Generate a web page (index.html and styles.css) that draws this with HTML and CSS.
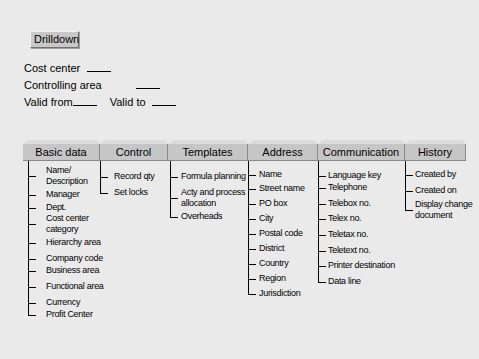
FILE: index.html
```html
<!DOCTYPE html>
<html>
<head>
<meta charset="utf-8">
<title>Cost center drilldown</title>
<link rel="stylesheet" href="styles.css">
</head>
<body>
<div class="page">
  <div class="toolbar"><button class="btn">Drilldown</button></div>
  <div class="form">
    <div class="row">Cost center<span class="blank b-cost"></span></div>
    <div class="row">Controlling area<span class="blank b-area"></span></div>
    <div class="row">Valid from<span class="blank"></span><span class="lbl-to">Valid to</span><span class="blank b-to"></span></div>
  </div>
  <div class="tabs">
    <div class="col col-basic">
      <div class="tab"><span class="tab-label">Basic data</span></div>
      <ul class="tree">
        <li>Name/<br>Description</li>
        <li>Manager</li>
        <li>Dept.</li>
        <li>Cost center<br>category</li>
        <li>Hierarchy area</li>
        <li>Company code</li>
        <li>Business area</li>
        <li>Functional area</li>
        <li>Currency</li>
        <li>Profit Center</li>
      </ul>
    </div>
    <div class="col col-control">
      <div class="tab"><span class="tab-label">Control</span></div>
      <ul class="tree">
        <li>Record qty</li>
        <li>Set locks</li>
      </ul>
    </div>
    <div class="col col-templates">
      <div class="tab"><span class="tab-label">Templates</span></div>
      <ul class="tree">
        <li>Formula planning</li>
        <li>Acty and process<br>allocation</li>
        <li>Overheads</li>
      </ul>
    </div>
    <div class="col col-address">
      <div class="tab"><span class="tab-label">Address</span></div>
      <ul class="tree">
        <li>Name</li>
        <li>Street name</li>
        <li>PO box</li>
        <li>City</li>
        <li>Postal code</li>
        <li>District</li>
        <li>Country</li>
        <li>Region</li>
        <li>Jurisdiction</li>
      </ul>
    </div>
    <div class="col col-comm">
      <div class="tab"><span class="tab-label">Communication</span></div>
      <ul class="tree">
        <li>Language key</li>
        <li>Telephone</li>
        <li>Telebox no.</li>
        <li>Telex no.</li>
        <li>Teletax no.</li>
        <li>Teletext no.</li>
        <li>Printer destination</li>
        <li>Data line</li>
      </ul>
    </div>
    <div class="col col-history">
      <div class="tab"><span class="tab-label">History</span></div>
      <ul class="tree">
        <li>Created by</li>
        <li>Created on</li>
        <li>Display change<br>document</li>
      </ul>
    </div>
  </div>
</div>
</body>
</html>
```

FILE: styles.css
```css
html, body {
  margin: 0;
  padding: 0;
  background: #eaeaea;
}

body {
  font-family: "Liberation Sans", Arial, sans-serif;
  color: #000;
  width: 479px;
  height: 359px;
  overflow: hidden;
}

.page {
  padding: 31px 0 0 0;
}

.toolbar {
  padding-left: 30px;
}

.btn {
  display: block;
  margin: 0;
  padding: 0 3px;
  height: 17px;
  width: 49px;
  font: 11px/15px "Liberation Sans", Arial, sans-serif;
  color: #000;
  background: #c8c8c8;
  border: 1px solid;
  border-color: #f2f2f2 #707070 #707070 #f2f2f2;
  box-shadow: 1px 1px 0 #a0a0a0;
}

.form {
  margin-top: 12px;
  padding-left: 24px;
  font-size: 11px;
  line-height: 17px;
}

.row {
  white-space: nowrap;
}

.blank {
  display: inline-block;
  width: 24px;
  height: 8px;
  border-bottom: 1px solid #000;
}

.b-cost { margin-left: 7px; }
.b-area { margin-left: 34px; }
.lbl-to { margin-left: 13px; }
.b-to { margin-left: 6px; }

.tabs {
  margin-top: 29px;
  padding-left: 23px;
  display: grid;
  grid-template-columns: 77px 68px 80px 70px 87px 61px;
}

.col {
  display: flex;
  flex-direction: column;
}

.tab::before {
  content: "";
  display: block;
  height: 4px;
  background: #dcdcdc;
  clip-path: polygon(5px 0, calc(100% - 3px) 0, 100% 100%, 0 100%);
}

.tab-label {
  display: block;
  height: 16px;
  line-height: 16px;
  font-size: 11px;
  text-align: center;
  white-space: nowrap;
  background: #c6c6c6;
  border-right: 1px solid #8a8a8a;
  border-bottom: 1px solid #8a8a8a;
}

.tree {
  list-style: none;
  margin: 0;
  padding: 0;
  border-left: 1px solid #000;
  font-size: 9px;
  line-height: 11px;
  letter-spacing: -0.3px;
  white-space: nowrap;
}

.tree li {
  position: relative;
  margin-top: 4px;
}

.tree li::before {
  content: "";
  position: absolute;
  left: 0;
  top: 50%;
  width: 7px;
  height: 1px;
  background: #000;
}

.tree li:last-child::after {
  content: "";
  position: absolute;
  left: -1px;
  top: calc(50% + 1px);
  bottom: 0;
  width: 1px;
  background: #eaeaea;
}

/* Basic data */
.col-basic .tree { margin-left: 5px; padding-top: 4px; }
.col-basic .tree li { padding-left: 17px; }
.col-basic .tree li:nth-child(1) { margin-top: 0; }
.col-basic .tree li:nth-child(2) { margin-top: 2px; }
.col-basic .tree li:nth-child(3) { margin-top: 2px; }
.col-basic .tree li:nth-child(4) { margin-top: 0; }
.col-basic .tree li:nth-child(5) { margin-top: 2px; }
.col-basic .tree li:nth-child(6) { margin-top: 5px; }
.col-basic .tree li:nth-child(7) { margin-top: 1px; }
.col-basic .tree li:nth-child(8) { margin-top: 5px; }
.col-basic .tree li:nth-child(9) { margin-top: 5px; }
.col-basic .tree li:nth-child(10) { margin-top: 1px; }

/* Control */
.col-control .tree { padding-top: 10px; }
.col-control .tree li { padding-left: 13px; }
.col-control .tree li:nth-child(1) { margin-top: 0; }
.col-control .tree li:nth-child(2) { margin-top: 5px; }

/* Templates */
.col-templates .tree { margin-left: 2px; padding-top: 10px; }
.col-templates .tree li { padding-left: 10px; }
.col-templates .tree li:nth-child(1) { margin-top: 0; }
.col-templates .tree li:nth-child(2) { margin-top: 5px; }
.col-templates .tree li:nth-child(3) { margin-top: 2px; }

/* Address */
.col-address .tree { padding-top: 8px; }
.col-address .tree li { padding-left: 10px; }
.col-address .tree li:nth-child(1) { margin-top: 0; }
.col-address .tree li:nth-child(2) { margin-top: 3px; }

/* Communication */
.col-comm .tree { padding-top: 9px; }
.col-comm .tree li { padding-left: 9px; }
.col-comm .tree li:nth-child(1) { margin-top: 0; }
.col-comm .tree li:nth-child(2) { margin-top: 1px; }
.col-comm .tree li:nth-child(3) { margin-top: 5px; }
.col-comm .tree li:nth-child(5) { margin-top: 5px; }
.col-comm .tree li:nth-child(6) { margin-top: 5px; }
.col-comm .tree li:nth-child(8) { margin-top: 5px; }

/* History */
.col-history .tree { padding-top: 8px; }
.col-history .tree li { padding-left: 9px; }
.col-history .tree li:nth-child(1) { margin-top: 0; }
.col-history .tree li:nth-child(2) { margin-top: 5px; }
.col-history .tree li:nth-child(3) { margin-top: 3px; }
```
